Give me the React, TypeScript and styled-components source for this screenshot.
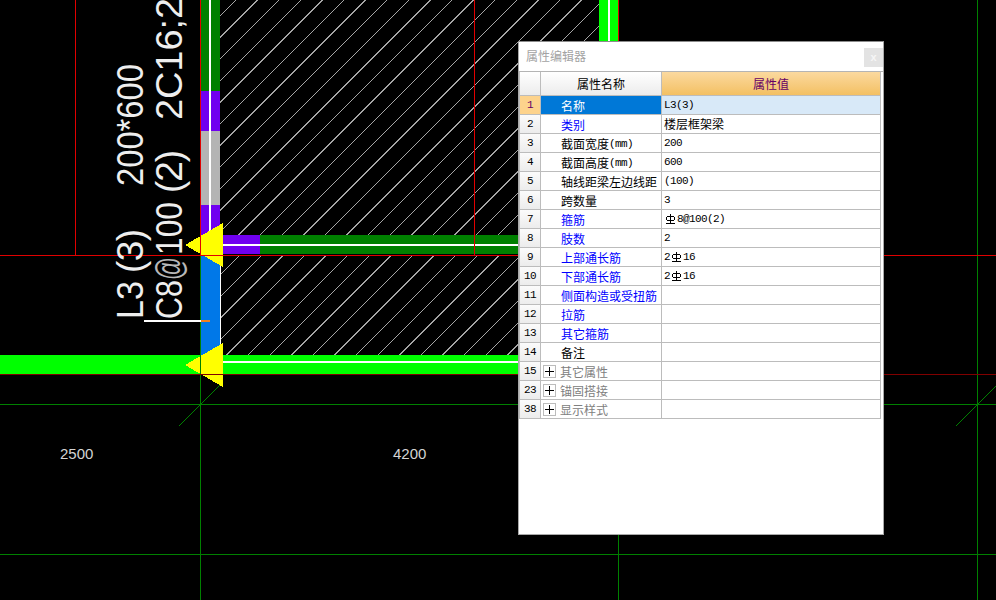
import React from 'react';
import styled, { createGlobalStyle } from 'styled-components';

const GlobalStyle = createGlobalStyle`
  html, body { margin: 0; padding: 0; background: #000; overflow: hidden; }
`;

const Stage = styled.div`
  position: relative;
  width: 996px;
  height: 600px;
  overflow: hidden;
  background: #000;
`;

const Drawing = styled.svg`
  display: block;
  width: 996px;
  height: 600px;
`;

const CadText = styled.text<{ $thin?: boolean }>`
  font-family: "Liberation Sans", Arial, sans-serif;
  font-size: 37px;
  fill: ${p => (p.$thin ? '#b8b8b8' : '#eeeeee')};
`;

const DimText = styled.text`
  font-family: "Liberation Sans", Arial, sans-serif;
  font-size: 15px;
  fill: #d4d4d4;
`;

const Dialog = styled.section`
  position: absolute;
  left: 518px;
  top: 41px;
  width: 366px;
  height: 494px;
  box-sizing: border-box;
  background: #fff;
  border: 1px solid #a9a9a9;
  border-top-color: #8c8c8c;
`;

const TitleBar = styled.header`
  display: flex;
  justify-content: space-between;
  align-items: flex-start;
  height: 29px;
  padding-left: 7px;
  border-bottom: 1px solid #b4b4b4;
`;

const Title = styled.h1`
  margin: 5px 0 0;
  font: 400 12px/18px "Noto Sans CJK SC", "Liberation Sans", sans-serif;
  color: #a3a3a3;
`;

const CloseButton = styled.button`
  width: 19px;
  height: 19px;
  margin-top: 6px;
  padding: 0;
  border: 0;
  background: #e3e3e3;
  color: #f6f6f6;
  font: 700 11px/19px "Liberation Sans", sans-serif;
`;

const Grid = styled.div`
  display: grid;
  grid-template-columns: 21px 121px 219px;
  width: 361px;
  border-left: 1px solid #bcbcbc;
`;

const Cell = styled.div`
  box-sizing: border-box;
  display: flex;
  align-items: center;
  height: 19px;
  border-right: 1px solid #bcbcbc;
  border-bottom: 1px solid #bcbcbc;
  font: 400 12px/18px "Noto Sans CJK SC", "Liberation Sans", sans-serif;
  white-space: nowrap;
  overflow: hidden;
`;

const HeadCell = styled(Cell)<{ $accent?: boolean }>`
  height: 24px;
  justify-content: center;
  background: ${p => (p.$accent ? 'linear-gradient(#fbd99f, #f3c063)' : 'linear-gradient(#ffffff, #ececec)')};
  color: ${p => (p.$accent ? '#660066' : '#000')};
`;

const NumCell = styled(Cell)<{ $active?: boolean }>`
  justify-content: center;
  background: ${p => (p.$active ? '#fdd38c' : 'linear-gradient(#fbfbfb, #ececec)')};
  color: ${p => (p.$active ? '#660066' : '#000')};
`;

const NameCell = styled(Cell)<{ $tone: string; $active?: boolean; $group?: boolean }>`
  padding: 1px 0 0 ${p => (p.$group ? '2px' : '20px')};
  background: ${p => (p.$active ? '#0078d7' : '#fff')};
  color: ${p => (p.$active ? '#fff' : p.$tone)};
`;

const ValueCell = styled(Cell)<{ $active?: boolean }>`
  padding-left: 2px;
  background: ${p => (p.$active ? '#d8e9f8' : '#fff')};
  color: #000;
`;

const Latin = styled.span`
  font: 400 11px/18px "Liberation Mono", monospace;
  letter-spacing: -0.6px;
`;

const ExpandBox = styled.span`
  position: relative;
  box-sizing: border-box;
  flex: none;
  width: 13px;
  height: 13px;
  margin-right: 4px;
  border: 1px solid #bcbcbc;
  &::before, &::after {
    content: '';
    position: absolute;
    background: #000;
  }
  &::before { left: 1px; right: 1px; top: 5px; height: 1px; }
  &::after { top: 1px; bottom: 1px; left: 5px; width: 1px; }
`;

const Rebar = styled.svg`
  flex: none;
  width: 9px;
  height: 10px;
  margin: 0 2px;
`;

const RebarMark = () => (
  <Rebar viewBox="0 0 9 10" shapeRendering="crispEdges">
    <path d="M1.5 2.5h6l1 1v2l-1 1h-6l-1-1v-2zM4.5 0v9M0 9.5h9" fill="none" stroke="#000" />
  </Rebar>
);

type Row = {
  n: number;
  name: string;
  unit?: string;
  tone: string;
  value?: React.ReactNode;
  group?: boolean;
};

const BLUE = '#0000ff';
const BLACK = '#000';
const GREY = '#808080';

const rows: Row[] = [
  { n: 1, name: '名称', tone: BLACK, value: <Latin>L3(3)</Latin> },
  { n: 2, name: '类别', tone: BLUE, value: '楼层框架梁' },
  { n: 3, name: '截面宽度', unit: '(mm)', tone: BLACK, value: <Latin>200</Latin> },
  { n: 4, name: '截面高度', unit: '(mm)', tone: BLACK, value: <Latin>600</Latin> },
  { n: 5, name: '轴线距梁左边线距', tone: BLACK, value: <Latin>(100)</Latin> },
  { n: 6, name: '跨数量', tone: BLACK, value: <Latin>3</Latin> },
  { n: 7, name: '箍筋', tone: BLUE, value: <><RebarMark /><Latin>8@100(2)</Latin></> },
  { n: 8, name: '肢数', tone: BLUE, value: <Latin>2</Latin> },
  { n: 9, name: '上部通长筋', tone: BLUE, value: <><Latin>2</Latin><RebarMark /><Latin>16</Latin></> },
  { n: 10, name: '下部通长筋', tone: BLUE, value: <><Latin>2</Latin><RebarMark /><Latin>16</Latin></> },
  { n: 11, name: '侧面构造或受扭筋', tone: BLUE },
  { n: 12, name: '拉筋', tone: BLUE },
  { n: 13, name: '其它箍筋', tone: BLUE },
  { n: 14, name: '备注', tone: BLACK },
  { n: 15, name: '其它属性', tone: GREY, group: true },
  { n: 23, name: '锚固搭接', tone: GREY, group: true },
  { n: 38, name: '显示样式', tone: GREY, group: true },
];

const hatchOffsets = Array.from({ length: 48 }, (_, i) => 236 + (i - 2) * 21.6);

const CadDrawing = () => (
  <Drawing viewBox="0 0 996 600">
    <defs>
      <clipPath id="hatch-area">
        <rect x="220" y="0" width="379" height="235" />
        <rect x="221" y="256" width="297" height="99" />
      </clipPath>
    </defs>

    <g shapeRendering="crispEdges">
      <g clipPath="url(#hatch-area)" stroke="#a6a6a6">
        {hatchOffsets.map(c => (
          <line key={c} x1={c} y1={0} x2={c - 600} y2={600} />
        ))}
      </g>

      {/* vertical beam */}
      <rect x="201" y="0" width="19" height="91" fill="#008000" />
      <rect x="201" y="91" width="19" height="40" fill="#7000f0" />
      <rect x="201" y="131" width="19" height="74" fill="#b4b4b4" />
      <rect x="201" y="205" width="19" height="50" fill="#7000f0" />
      <rect x="209" y="0" width="2" height="240" fill="#fff" />
      <rect x="201" y="255" width="19" height="100" fill="#0078e8" />
      <rect x="220" y="262" width="1" height="84" fill="#fff" />

      {/* horizontal beams */}
      <rect x="223" y="235" width="37" height="19" fill="#7000f0" />
      <rect x="260" y="235" width="260" height="19" fill="#008000" />
      <rect x="223" y="244" width="297" height="2" fill="#fff" />
      <rect x="0" y="355" width="520" height="19" fill="#00ff00" />
      <rect x="223" y="361" width="297" height="2" fill="#fff" />
      <rect x="599" y="0" width="19" height="60" fill="#00ff00" />
      <rect x="608" y="0" width="2" height="60" fill="#fff" />

      {/* axis lines */}
      <path d="M0 404.5H996M0 554.5H996M200.5 255V600M618.5 255V600M977.5 0V600" stroke="#008000" fill="none" />
      <path d="M179 426L222 383M956 426L997 385" stroke="#008000" fill="none" />

      {/* leader */}
      <rect x="144" y="320" width="57" height="2" fill="#fff" />
      <rect x="201" y="320" width="9" height="2" fill="#f08020" />

      {/* support markers */}
      <polygon points="185,245 223,223 223,267" fill="#ffff00" />
      <polygon points="185,365 223,343 223,387" fill="#ffff00" />

      <path d="M200.5 355V404" stroke="#008000" fill="none" />
      <path d="M0 255.5H996M75.5 0V255M200.5 0V255M474.5 0V255M618.5 0V255" stroke="#e00000" fill="none" />
      <path d="M0 374.5H996" stroke="#800000" fill="none" />
    </g>

    <CadText transform="translate(143 319) rotate(-90)" textLength={38} lengthAdjust="spacingAndGlyphs">L3</CadText>
    <CadText transform="translate(143 273) rotate(-90)" textLength={44} lengthAdjust="spacing">(3)</CadText>
    <CadText transform="translate(143 186) rotate(-90)" textLength={122} lengthAdjust="spacingAndGlyphs">200*600</CadText>
    <CadText transform="translate(182 319) rotate(-90)" textLength={39} lengthAdjust="spacingAndGlyphs">C8</CadText>
    <CadText $thin transform="translate(182 280) rotate(-90)" textLength={23} lengthAdjust="spacingAndGlyphs">@</CadText>
    <CadText transform="translate(182 255) rotate(-90)" textLength={53} lengthAdjust="spacingAndGlyphs">100</CadText>
    <CadText transform="translate(182 193) rotate(-90)" textLength={43} lengthAdjust="spacing">(2)</CadText>
    <CadText transform="translate(182 120) rotate(-90)" textLength={122} lengthAdjust="spacingAndGlyphs">2C16;2</CadText>

    <DimText x="60" y="459">2500</DimText>
    <DimText x="393" y="459">4200</DimText>
  </Drawing>
);

const PropertyDialog = () => (
  <Dialog>
    <TitleBar>
      <Title>属性编辑器</Title>
      <CloseButton type="button">x</CloseButton>
    </TitleBar>
    <Grid>
      <HeadCell />
      <HeadCell>属性名称</HeadCell>
      <HeadCell $accent>属性值</HeadCell>
      {rows.map(r => {
        const active = r.n === 1;
        return (
          <React.Fragment key={r.n}>
            <NumCell $active={active}><Latin>{r.n}</Latin></NumCell>
            <NameCell $tone={r.tone} $active={active} $group={r.group}>
              {r.group && <ExpandBox />}
              {r.name}
              {r.unit && <Latin>{r.unit}</Latin>}
            </NameCell>
            <ValueCell $active={active}>{r.value}</ValueCell>
          </React.Fragment>
        );
      })}
    </Grid>
  </Dialog>
);

export default function App() {
  return (
    <Stage>
      <GlobalStyle />
      <CadDrawing />
      <PropertyDialog />
    </Stage>
  );
}
